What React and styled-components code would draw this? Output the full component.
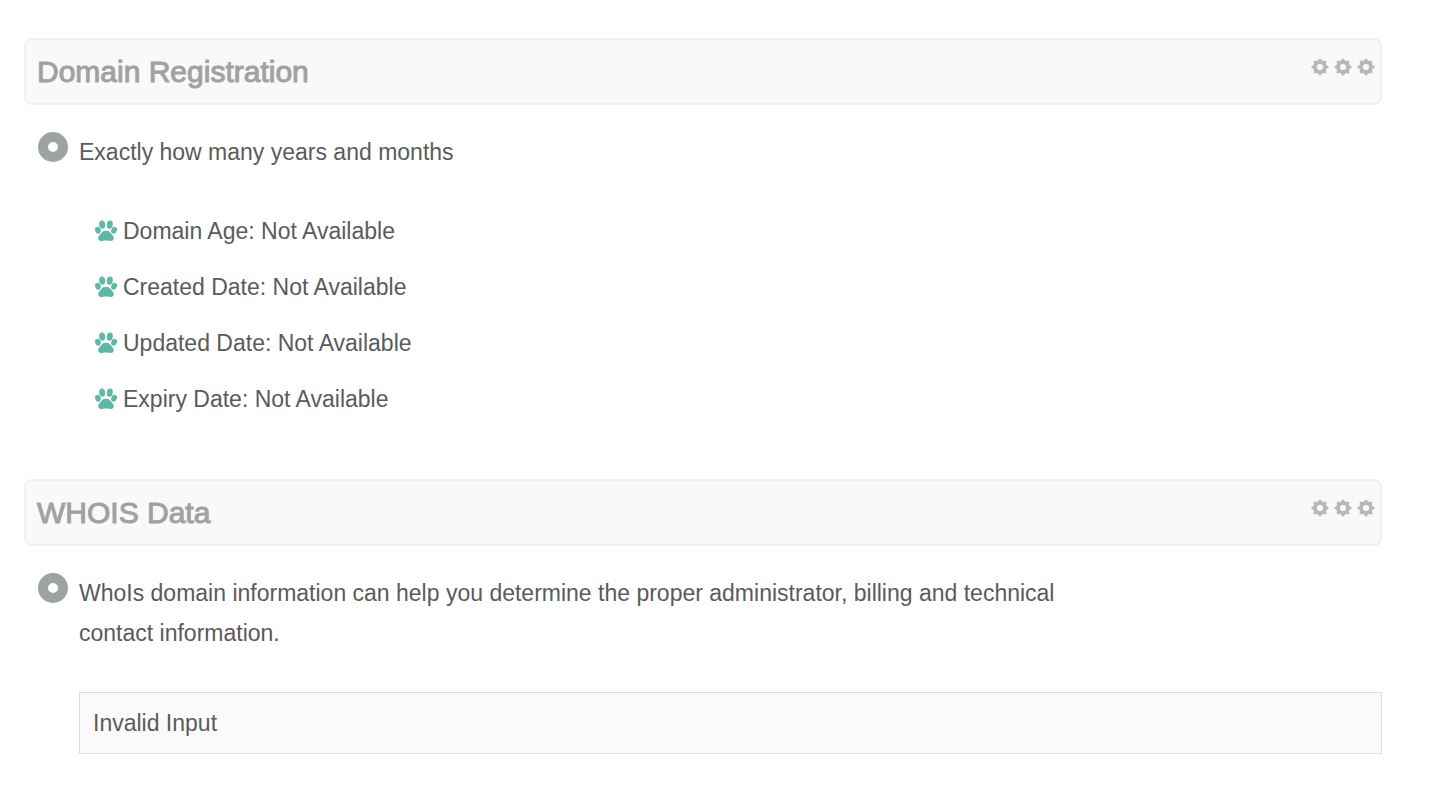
import React from 'react';
import styled, { createGlobalStyle } from 'styled-components';

const GlobalStyle = createGlobalStyle`
  * {
    box-sizing: border-box;
  }

  body {
    margin: 0;
    background: #fff;
    color: #5a5b5b;
    font-family: "Liberation Sans", Helvetica, Arial, sans-serif;
    font-size: 23px;
    line-height: 40px;
  }
`;

const Page = styled.main`
  padding: 38px 48px 38px 24px;
`;

const Section = styled.section`
  & + & {
    margin-top: 60px;
  }
`;

const Header = styled.header`
  display: flex;
  justify-content: space-between;
  align-items: flex-start;
  padding: 12px 5px 11px 11px;
  border: 2px solid #f0f0f0;
  border-radius: 8px;
  background: #f9f9f9;
`;

const Title = styled.h2`
  margin: 0;
  color: #a0a2a2;
  font-size: 30px;
  font-weight: 400;
  line-height: 40px;
  -webkit-text-stroke: 1px #a0a2a2;
`;

const Gears = styled.div`
  display: flex;
  gap: 5px;
  padding-top: 6px;
`;

const Content = styled.div`
  display: flex;
  align-items: flex-start;
  gap: 11px;
  padding: 27px 0 0 14px;
`;

const Disc = styled.span`
  flex: none;
  width: 30px;
  height: 30px;
  border: 10px solid #9da3a2;
  border-radius: 50%;
`;

const Body = styled.div`
  flex: 1;
`;

const Intro = styled.p`
  margin: 0;
  max-width: 78%;
`;

const List = styled.ul`
  display: flex;
  flex-direction: column;
  gap: 16px;
  margin: 39px 0 0;
  padding: 0 0 0 16px;
  list-style: none;
`;

const Item = styled.li`
  display: flex;
  align-items: center;
  gap: 6px;
`;

const Result = styled.div`
  margin-top: 39px;
  padding: 10px 13px;
  border: 1px solid #dcdcdc;
  background: #fafafa;
`;

const Gear = () => (
  <svg width="18" height="18" viewBox="0 0 18 18" aria-hidden="true">
    <circle cx="9" cy="9" r="5" fill="none" stroke="#b6b8b7" strokeWidth="3.8" />
    {[0, 45, 90, 135, 180, 225, 270, 315].map((angle) => (
      <path
        key={angle}
        d="M7.4 3 L7.8 0.9 Q9 -0.1 10.2 0.9 L10.6 3 Z"
        fill="#b6b8b7"
        transform={`rotate(${angle} 9 9)`}
      />
    ))}
  </svg>
);

const Paw = () => (
  <svg width="22" height="22" viewBox="0 0 22 22" fill="#5fb7a5" aria-hidden="true">
    <ellipse cx="7.2" cy="4.6" rx="3" ry="4.1" transform="rotate(-8 7.2 4.6)" />
    <ellipse cx="14.8" cy="4.6" rx="3" ry="4.1" transform="rotate(8 14.8 4.6)" />
    <ellipse cx="2.9" cy="10.2" rx="2.8" ry="3.5" transform="rotate(-22 2.9 10.2)" />
    <ellipse cx="19.1" cy="10.2" rx="2.8" ry="3.5" transform="rotate(22 19.1 10.2)" />
    <path d="M11 10.8 C14.1 10.8 15.2 12.3 16.3 13.8 C17.6 15.4 18.9 16.5 18.8 18.6 C18.7 20.5 17.4 21.1 15.6 21 C13.9 20.9 12.9 20.6 11 20.6 C9.1 20.6 8.1 20.9 6.4 21 C4.6 21.1 3.3 20.5 3.2 18.6 C3.1 16.5 4.4 15.4 5.7 13.8 C6.8 12.3 7.9 10.8 11 10.8 Z" />
  </svg>
);

const Panel = ({ title, intro, children }) => (
  <Section>
    <Header>
      <Title>{title}</Title>
      <Gears>
        <Gear />
        <Gear />
        <Gear />
      </Gears>
    </Header>
    <Content>
      <Disc />
      <Body>
        <Intro>{intro}</Intro>
        {children}
      </Body>
    </Content>
  </Section>
);

const DATES = [
  { label: 'Domain Age', value: 'Not Available' },
  { label: 'Created Date', value: 'Not Available' },
  { label: 'Updated Date', value: 'Not Available' },
  { label: 'Expiry Date', value: 'Not Available' },
];

const App = () => {
  return (
    <Page>
      <GlobalStyle />
      <Panel title="Domain Registration" intro="Exactly how many years and months">
        <List>
          {DATES.map((date) => (
            <Item key={date.label}>
              <Paw />
              <span>{date.label}: {date.value}</span>
            </Item>
          ))}
        </List>
      </Panel>
      <Panel
        title="WHOIS Data"
        intro="WhoIs domain information can help you determine the proper administrator, billing and technical contact information."
      >
        <Result>Invalid Input</Result>
      </Panel>
    </Page>
  );
};

export default App;
